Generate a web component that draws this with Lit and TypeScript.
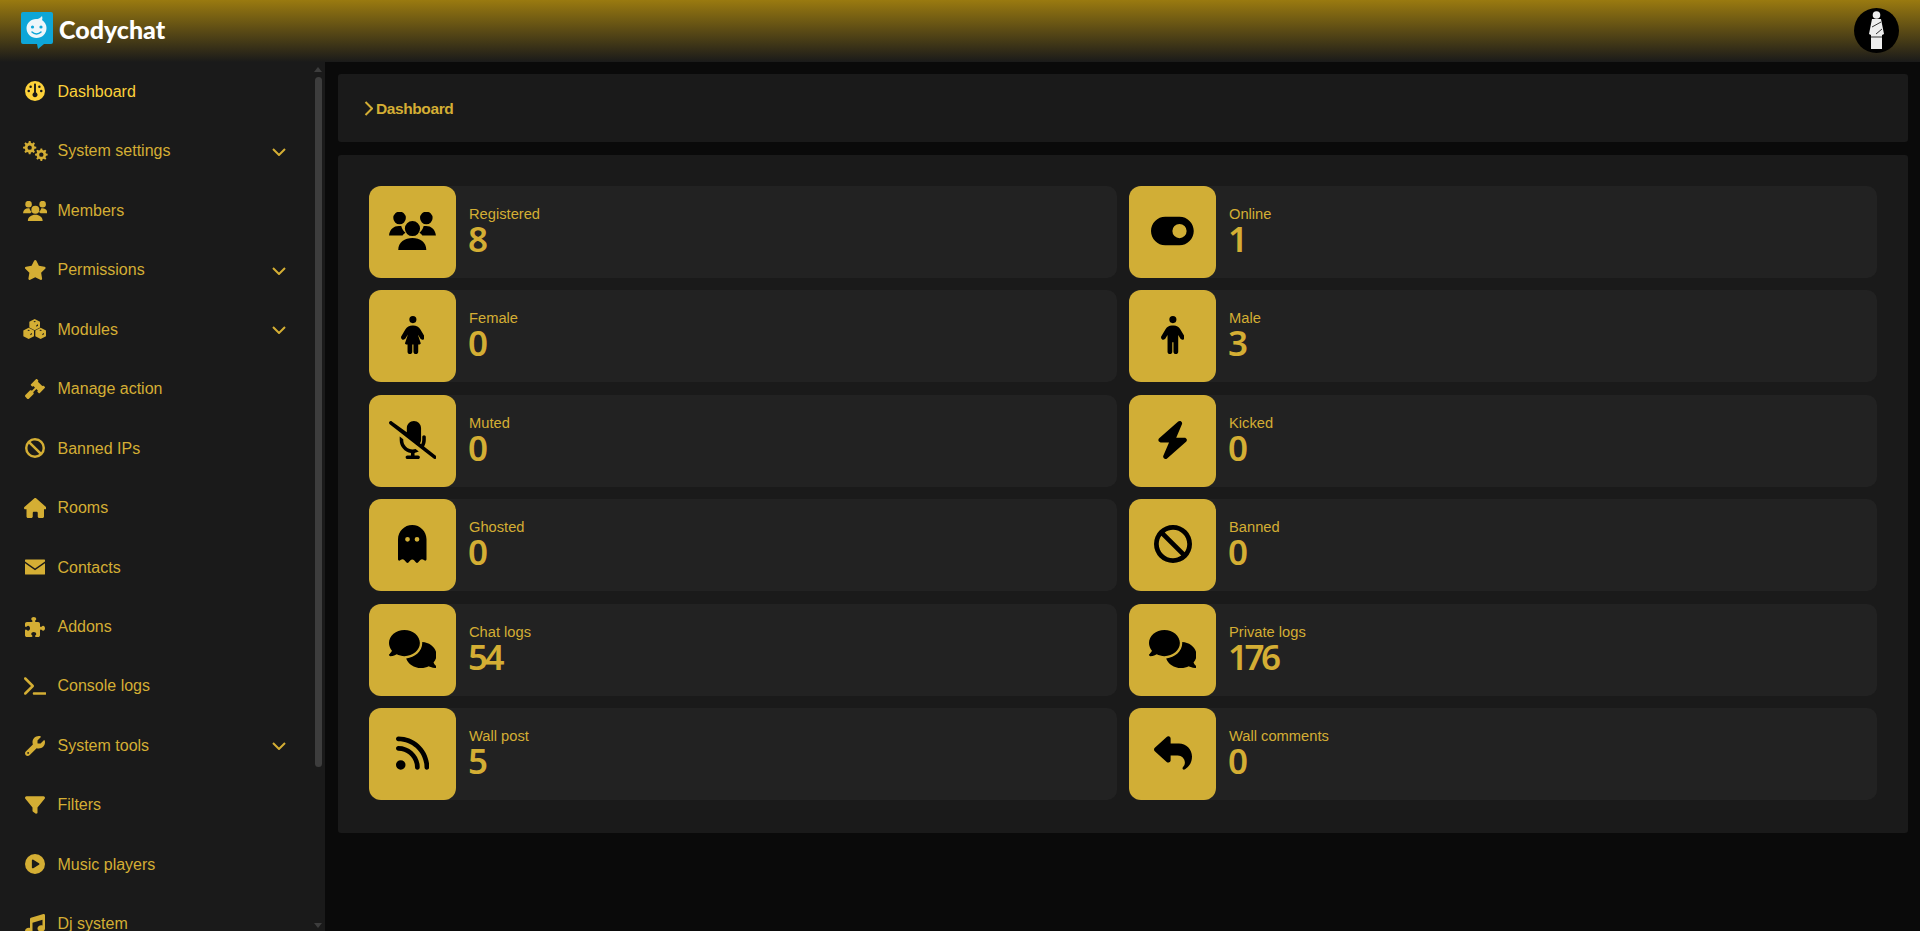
import { LitElement, html, css } from "lit";
import { customElement } from "lit/decorators.js";

type Icon = { w: number; h: number; d: string; eo?: boolean };

const c = (x: number, y: number, r: number) =>
  `M${x - r} ${y}a${r} ${r} 0 1 0 ${2 * r} 0a${r} ${r} 0 1 0 ${-2 * r} 0z`;

const gear = (cx: number, cy: number, R: number, r: number, hole: number, n = 8) => {
  const pts: string[] = [];
  for (let i = 0; i < n; i++) {
    const a = (i * 2 * Math.PI) / n;
    const s = Math.PI / n;
    const p = (rad: number, t: number) =>
      `${(cx + rad * Math.cos(t)).toFixed(2)} ${(cy + rad * Math.sin(t)).toFixed(2)}`;
    pts.push(p(r, a - s * 0.62), p(R, a - s * 0.34), p(R, a + s * 0.34), p(r, a + s * 0.62));
  }
  return `M${pts.join("L")}z${c(cx, cy, hole)}`;
};

const cube = (x: number, y: number) =>
  `M${x} ${y - 17}L${x + 16} ${y - 8.500}V${y + 8.500}L${x} ${y + 17}L${x - 16} ${y + 8.500}V${y - 8.500}z` +
  `M${x - 4} ${y - 9}L${x} ${y - 11}L${x + 4} ${y - 9}L${x} ${y - 7}z` +
  `M${x + 5} ${y + 2}L${x + 10} ${y - 1}V${y + 3}L${x + 5} ${y + 6}z`;

const I: Record<string, Icon> = {
  gauge: { w: 512, h: 512, d: "M0 256a256 256 0 1 1 512 0A256 256 0 1 1 0 256zm320 96c0-26.9-16.5-49.9-40-59.3V88c0-13.3-10.7-24-24-24s-24 10.7-24 24V292.7c-23.5 9.5-40 32.5-40 59.3c0 35.3 28.7 64 64 64s64-28.7 64-64zM144 176a32 32 0 1 0 0-64 32 32 0 1 0 0 64zm-16 80a32 32 0 1 0 -64 0 32 32 0 1 0 64 0zm288 32a32 32 0 1 0 0-64 32 32 0 1 0 0 64zM400 144a32 32 0 1 0 -64 0 32 32 0 1 0 64 0z" },
  gears: { w: 75, h: 60, eo: true, d: gear(20, 20, 20, 15, 6.5) + gear(55, 41, 19, 14.5, 6.5) },
  users: { w: 142, h: 115, d: c(32, 18, 19) + c(113, 18, 19) + c(71, 50, 23) + "M28 115C28 92 48 79 71 79C94 79 113 92 113 115z" + "M0 71C2 52 14 42 30 42L37 42C40 52 44 58 50 63C46 65 43 68 41 71z" + "M142 71C140 52 128 42 112 42L105 42C102 52 98 58 92 63C96 65 99 68 101 71z" },
  star: { w: 576, h: 512, d: "M316.9 18C311.6 7 300.4 0 288.1 0s-23.4 7-28.8 18L195 150.3 51.4 171.5c-12 1.8-22 10.2-25.7 21.7s-.7 24.2 7.9 32.7L137.8 329 113.2 474.7c-2 12 3 24.2 12.9 31.3s23 8 33.8 2.3l128.3-68.5 128.3 68.5c10.8 5.7 23.9 4.9 33.8-2.3s14.9-19.3 12.9-31.3L438.5 329 542.7 225.9c8.6-8.5 11.7-21.2 7.9-32.7s-13.7-19.9-25.7-21.7L381.2 150.3 316.9 18z" },
  cubes: { w: 70, h: 60, eo: true, d: cube(35, 17) + cube(17, 43) + cube(53, 43) },
  gavel: { w: 512, h: 512, d: "M504.971 199.362l-22.627-22.627c-9.373-9.373-24.569-9.373-33.941 0l-5.657 5.657L329.608 69.255l5.657-5.657c9.373-9.373 9.373-24.569 0-33.941L312.638 7.029c-9.373-9.373-24.569-9.373-33.941 0L154.246 131.48c-9.373 9.373-9.373 24.569 0 33.941l22.627 22.627c9.373 9.373 24.569 9.373 33.941 0l5.657-5.657 39.598 39.598-81.04 81.04-5.657-5.657c-12.497-12.497-32.758-12.497-45.255 0L9.373 412.118c-12.497 12.497-12.497 32.758 0 45.255l45.255 45.255c12.497 12.497 32.758 12.497 45.255 0l114.745-114.745c12.497-12.497 12.497-32.758 0-45.255l-5.657-5.657 81.04-81.04 39.598 39.598-5.657 5.657c-9.373 9.373-9.373 24.569 0 33.941l22.627 22.627c9.373 9.373 24.569 9.373 33.941 0l124.451-124.451c9.372-9.372 9.372-24.568 0-33.941z" },
  ban: { w: 512, h: 512, d: "M367.2 412.5L99.5 144.8C77.1 176.1 64 214.5 64 256c0 106 86 192 192 192c41.5 0 79.9-13.1 111.2-35.5zm45.3-45.3C434.9 335.9 448 297.5 448 256c0-106-86-192-192-192c-41.5 0-79.9 13.1-111.2 35.5L412.5 367.2zM0 256a256 256 0 1 1 512 0A256 256 0 1 1 0 256z" },
  house: { w: 576, h: 512, d: "M575.8 255.5c0 18-15 32.1-32 32.1h-32l.7 160.2c0 2.7-.2 5.4-.5 8.1V472c0 22.1-17.9 40-40 40H456c-1.1 0-2.2 0-3.3-.1c-1.4 .1-2.8 .1-4.2 .1H416 392c-22.1 0-40-17.9-40-40V448 384c0-17.7-14.3-32-32-32H256c-17.7 0-32 14.3-32 32v64 24c0 22.1-17.9 40-40 40H160 128.1c-1.5 0-3-.1-4.5-.2c-1.2 .1-2.4 .2-3.6 .2H104c-22.1 0-40-17.9-40-40V360c0-.9 0-1.9 .1-2.8V287.6H32c-18 0-32-14-32-32.1c0-9 3-17 10-24L266.4 8c7-7 15-8 22-8s15 2 21 7L564.8 231.5c8 7 12 15 11 24z" },
  envelope: { w: 512, h: 512, d: "M16 64H496a16 16 0 0 1 16 16V118L256 292L0 118V80a16 16 0 0 1 16-16zM0 162L256 336L512 162V432a16 16 0 0 1-16 16H16a16 16 0 0 1-16-16z" },
  puzzle: { w: 512, h: 512, d: "M192 104.8c0-9.2-5.8-17.3-13.2-22.8C167.2 73.3 160 61.3 160 48c0-26.5 28.7-48 64-48s64 21.5 64 48c0 13.3-7.2 25.3-18.8 34c-7.4 5.5-13.2 13.6-13.2 22.8c0 12.8 10.4 23.2 23.2 23.2H336c26.5 0 48 21.5 48 48v56.8c0 12.8 10.4 23.2 23.2 23.2c9.2 0 17.3-5.8 22.8-13.2c8.7-11.6 20.7-18.8 34-18.8c26.5 0 48 28.7 48 64s-21.5 64-48 64c-13.3 0-25.3-7.2-34-18.8c-5.5-7.4-13.6-13.2-22.8-13.2c-12.8 0-23.2 10.4-23.2 23.2V464c0 26.5-21.5 48-48 48H279.2c-12.8 0-23.2-10.4-23.2-23.2c0-9.2 5.8-17.3 13.2-22.8c11.6-8.7 18.8-20.7 18.8-34c0-26.5-28.7-48-64-48s-64 21.5-64 48c0 13.3 7.2 25.3 18.8 34c7.4 5.5 13.2 13.6 13.2 22.8c0 12.8-10.4 23.2-23.2 23.2H48c-26.5 0-48-21.5-48-48V343.2C0 330.4 10.4 320 23.2 320c9.2 0 17.3 5.8 22.8 13.2C54.7 344.8 66.7 352 80 352c26.5 0 48-28.7 48-64s-21.5-64-48-64c-13.3 0-25.3 7.2-34 18.8C40.5 250.2 32.4 256 23.2 256C10.4 256 0 245.6 0 232.8V176c0-26.5 21.5-48 48-48H168.8c12.8 0 23.2-10.4 23.2-23.2z" },
  terminal: { w: 576, h: 512, d: "M9.4 86.6C-3.1 74.1-3.1 53.9 9.4 41.4s32.8-12.5 45.3 0l192 192c12.5 12.5 12.5 32.8 0 45.3l-192 192c-12.5 12.5-32.8 12.5-45.3 0s-12.5-32.8 0-45.3L178.7 256 9.4 86.6zM256 416H544c17.7 0 32 14.3 32 32s-14.3 32-32 32H256c-17.7 0-32-14.3-32-32s14.3-32 32-32z" },
  wrench: { w: 512, h: 512, d: "M352 320c88.4 0 160-71.6 160-160c0-15.3-2.2-30.1-6.2-44.2c-3.1-10.8-16.4-13.2-24.3-5.3l-76.8 76.8c-3 3-7.1 4.7-11.3 4.7H336c-8.8 0-16-7.2-16-16V118.6c0-4.2 1.7-8.3 4.7-11.3l76.8-76.8c7.9-7.9 5.4-21.2-5.3-24.3C382.1 2.2 367.3 0 352 0C263.6 0 192 71.6 192 160c0 19.1 3.4 37.5 9.5 54.5L19.9 396.1C7.2 408.8 0 426.1 0 444.1C0 481.6 30.4 512 67.9 512c18 0 35.3-7.2 48-19.9L297.5 310.5c17 6.2 35.4 9.5 54.5 9.5zM80 408a24 24 0 1 1 0 48 24 24 0 1 1 0-48z" },
  filter: { w: 512, h: 512, d: "M3.9 54.9C10.5 40.9 24.5 32 40 32H472c15.5 0 29.5 8.9 36.1 22.9s4.6 30.5-5.2 42.5L320 320.9V448c0 12.1-6.8 23.2-17.7 28.6s-23.8 4.3-33.5-3l-64-48c-8.1-6-12.8-15.5-12.8-25.6V320.9L9 97.3C-.7 85.4-2.8 68.8 3.9 54.9z" },
  play: { w: 512, h: 512, d: "M0 256a256 256 0 1 1 512 0A256 256 0 1 1 0 256zM188.3 147.1c-7.6 4.2-12.3 12.3-12.3 20.9V344c0 8.7 4.7 16.7 12.3 20.9s16.8 4.1 24.3-.5l144-88c7.1-4.4 11.5-12.1 11.5-20.5s-4.4-16.1-11.5-20.5l-144-88c-7.4-4.5-16.7-4.7-24.3-.5z" },
  music: { w: 512, h: 512, d: "M499.1 6.3c8.1 6 12.9 15.6 12.9 25.7v72V368c0 44.2-43 80-96 80s-96-35.8-96-80s43-80 96-80c11.2 0 22 1.6 32 4.6V147L192 223.8V432c0 44.2-43 80-96 80s-96-35.8-96-80s43-80 96-80c11.2 0 22 1.6 32 4.6V200 128c0-14.1 9.3-26.6 22.8-30.7l320-96c9.7-2.9 20.2-1.1 28.3 5z" },
  toggle: { w: 576, h: 512, d: "M192 64C86 64 0 150 0 256S86 448 192 448H384c106 0 192-86 192-192s-86-192-192-192H192zm192 96a96 96 0 1 1 0 192 96 96 0 1 1 0-192z" },
  dress: { w: 320, h: 512, d: "M160 0a48 48 0 1 1 0 96 48 48 0 1 1 0-96zM88 384H70.2c-10.9 0-18.6-10.7-15.2-21.1L93.3 248.1 59.4 304.5c-9.1 15.1-28.8 20-43.9 10.9s-20-28.8-10.9-43.9l53.6-89.2c20.3-33.7 56.7-54.3 96-54.3h11.6c39.3 0 75.7 20.6 96 54.3l53.6 89.2c9.1 15.1 4.2 34.8-10.9 43.9s-34.8 4.2-43.9-10.9l-33.9-56.3L265 362.9c3.5 10.4-4.3 21.1-15.2 21.1H232v96c0 17.7-14.3 32-32 32s-32-14.3-32-32V384H152v96c0 17.7-14.3 32-32 32s-32-14.3-32-32V384z" },
  person: { w: 320, h: 512, d: "M112 48a48 48 0 1 1 96 0 48 48 0 1 1 -96 0zm40 304V480c0 17.7-14.3 32-32 32s-32-14.3-32-32V256.9L59.4 304.5c-9.1 15.1-28.8 20-43.9 10.9s-20-28.8-10.9-43.9l58.3-97c17.4-28.9 48.6-46.6 82.3-46.6h29.7c33.7 0 64.9 17.7 82.3 46.6l58.3 97c9.1 15.1 4.2 34.8-10.9 43.9s-34.8 4.2-43.9-10.9L232 256.9V480c0 17.7-14.3 32-32 32s-32-14.3-32-32V352H152z" },
  mute: { w: 640, h: 512, d: "M38.8 5.1C28.4-3.1 13.3-1.2 5.1 9.2S-1.2 34.7 9.2 42.9l592 464c10.4 8.2 25.5 6.3 33.7-4.1s6.3-25.5-4.1-33.7L472.1 344.7c15.2-26 23.9-56.3 23.9-88.7V216c0-13.3-10.7-24-24-24s-24 10.7-24 24v40c0 21.2-5.1 41.1-14.2 58.7L416 300.8c9.9-14.4 16-32.3 16-52.8V96c0-53-43-96-96-96s-96 43-96 96v54.3L38.8 5.1zM344 430.4c20.4-2.8 39.7-9.1 57.3-18.2l-43.1-33.9C346.1 382 333.3 384 320 384c-70.7 0-128-57.3-128-128v-8.7L144.7 210c-.5 1.9-.7 3.9-.7 6v40c0 89.1 66.2 162.7 152 174.4V464H248c-13.3 0-24 10.7-24 24s10.7 24 24 24h72 72c13.3 0 24-10.7 24-24s-10.7-24-24-24H344V430.4z" },
  bolt: { w: 448, h: 512, d: "M349.4 44.6c5.9-13.7 1.5-29.7-10.6-38.5s-28.6-8-39.9 1.8l-256 224c-10 8.8-13.6 22.9-8.9 35.3S50.7 288 64 288H175.5L98.6 467.4c-5.9 13.7-1.5 29.7 10.6 38.5s28.6 8 39.9-1.8l256-224c10-8.8 13.6-22.9 8.9-35.3s-16.6-20.7-30-20.7H272.5L349.4 44.6z" },
  ghost: { w: 384, h: 512, d: "M40.1 467.1l-11.2 9c-3.2 2.5-7.1 3.9-11.1 3.9C8 480 0 472 0 462.2V192C0 86 86 0 192 0S384 86 384 192V462.2c0 9.8-8 17.8-17.8 17.8c-4 0-7.9-1.4-11.1-3.9l-11.2-9c-13.4-10.7-32.8-9-44.1 3.9L269.3 506c-3.3 3.8-8.2 6-13.3 6s-9.9-2.2-13.3-6l-26.6-30.5c-12.7-14.6-35.4-14.6-48.2 0L141.3 506c-3.3 3.8-8.2 6-13.3 6s-9.9-2.2-13.3-6L84.2 471c-11.3-12.9-30.7-14.6-44.1-3.9zM160 192a32 32 0 1 0 -64 0 32 32 0 1 0 64 0zm96 32a32 32 0 1 0 0-64 32 32 0 1 0 0 64z" },
  comments: { w: 640, h: 512, d: "M208 352c114.9 0 208-78.8 208-176S322.9 0 208 0S0 78.8 0 176c0 38.6 14.7 74.3 39.6 103.4c-3.5 9.4-8.7 17.7-14.2 24.7c-4.8 6.2-9.7 11-13.3 14.3c-1.8 1.6-3.3 2.9-4.3 3.7c-.5 .4-.9 .7-1.1 .8l-.2 .2 0 0 0 0C1 327.2-1.4 334.4 .8 340.9S9.1 352 16 352c21.8 0 43.8-5.6 62.1-12.5c9.2-3.5 17.8-7.4 25.3-11.4C134.1 343.3 169.8 352 208 352zM448 176c0 112.3-99.1 196.9-216.5 207C255.8 457.4 336.4 512 432 512c38.2 0 73.9-8.7 104.7-23.9c7.5 4 16 7.9 25.2 11.4c18.3 6.9 40.3 12.5 62.1 12.5c6.9 0 13.1-4.5 15.2-11.1c2.1-6.6-.2-13.8-5.8-17.9l0 0 0 0-.2-.2c-.2-.2-.6-.4-1.1-.8c-1-.8-2.5-2-4.3-3.7c-3.6-3.3-8.5-8.1-13.3-14.3c-5.5-7-10.7-15.4-14.2-24.7c24.9-29 39.6-64.7 39.6-103.4c0-92.8-84.9-168.9-192.6-175.5c.4 5.1 .6 10.3 .6 15.5z" },
  rss: { w: 448, h: 512, d: "M0 64C0 46.3 14.3 32 32 32c229.8 0 416 186.2 416 416c0 17.7-14.3 32-32 32s-32-14.3-32-32C384 253.6 226.4 96 32 96C14.3 96 0 81.7 0 64zM0 416a64 64 0 1 1 128 0A64 64 0 1 1 0 416zM32 160c159.1 0 288 128.9 288 288c0 17.7-14.3 32-32 32s-32-14.3-32-32c0-123.7-100.3-224-224-224c-17.7 0-32-14.3-32-32s14.3-32 32-32z" },
  reply: { w: 512, h: 512, d: "M205 34.8c11.5 5.1 19 16.6 19 29.2v64H336c97.2 0 176 78.8 176 176c0 113.3-81.5 163.9-100.2 174.1c-2.5 1.4-5.3 1.9-8.1 1.9c-10.9 0-19.7-8.9-19.7-19.7c0-7.5 4.3-14.4 9.8-19.5c9.4-8.8 22.2-26.4 22.2-56.7c0-53-43-96-96-96H224v64c0 12.6-7.4 24.1-19 29.2s-25 3-34.4-5.4l-160-144C3.9 225.7 0 217.1 0 208s3.9-17.7 10.6-23.8l160-144c9.4-8.5 22.8-10.6 34.4-5.4z" },
};

const NAV: { label: string; icon: string; more?: boolean; active?: boolean }[] = [
  { label: "Dashboard", icon: "gauge", active: true },
  { label: "System settings", icon: "gears", more: true },
  { label: "Members", icon: "users" },
  { label: "Permissions", icon: "star", more: true },
  { label: "Modules", icon: "cubes", more: true },
  { label: "Manage action", icon: "gavel" },
  { label: "Banned IPs", icon: "ban" },
  { label: "Rooms", icon: "house" },
  { label: "Contacts", icon: "envelope" },
  { label: "Addons", icon: "puzzle" },
  { label: "Console logs", icon: "terminal" },
  { label: "System tools", icon: "wrench", more: true },
  { label: "Filters", icon: "filter" },
  { label: "Music players", icon: "play" },
  { label: "Dj system", icon: "music" },
];

const STATS: [string, string, string][] = [
  ["Registered", "8", "users"], ["Online", "1", "toggle"],
  ["Female", "0", "dress"], ["Male", "3", "person"],
  ["Muted", "0", "mute"], ["Kicked", "0", "bolt"],
  ["Ghosted", "0", "ghost"], ["Banned", "0", "ban"],
  ["Chat logs", "54", "comments"], ["Private logs", "176", "comments"],
  ["Wall post", "5", "rss"], ["Wall comments", "0", "reply"],
];

const icon = (name: string, h: number) => {
  const i = I[name];
  return html`<svg class="ico ${i.eo ? "eo" : ""}" viewBox="0 0 ${i.w} ${i.h}"
    style="width:${(i.w / i.h) * h}px;height:${h}px"><path d=${i.d}></path></svg>`;
};

@customElement("app-root")
export class AppRoot extends LitElement {
  static styles = css`
    :host {
      display: flex;
      flex-direction: column;
      height: 100vh;
      overflow: hidden;
      background: #0a0a0a;
      font-family: "Liberation Sans", Arial, sans-serif;
      color: #d4ae34;
    }
    .top {
      flex: 0 0 62px;
      display: flex;
      align-items: center;
      justify-content: space-between;
      padding: 0 21px 0 21px;
      box-sizing: border-box;
      background: linear-gradient(to bottom, #9a7a10, #1a1a1a);
    }
    .brand { display: flex; align-items: center; gap: 6px; }
    .logo { width: 32px; height: 37px; margin-top: -1px; display: block; }
    .name {
      font-family: Lato, "Noto Sans", sans-serif;
      font-weight: 900;
      font-size: 25px;
      color: #fff;
      line-height: 30px;
      margin-top: -4px;
    }
    .avatar { width: 45px; height: 45px; display: block; margin-top: -1px; }
    .body { flex: 1; min-height: 0; display: flex; }
    .side {
      flex: 0 0 325px;
      box-sizing: border-box;
      overflow: hidden;
      background: #1a1a1a;
      position: relative;
    }
    .thumb {
      position: absolute;
      left: 315px;
      top: 15px;
      width: 7px;
      height: 690px;
      border-radius: 4px;
      background: #3d3d3d;
    }
    .arrow {
      position: absolute;
      left: 314px;
      width: 0;
      height: 0;
      border-left: 4.5px solid transparent;
      border-right: 4.5px solid transparent;
    }
    .arrow.up { top: 5px; border-bottom: 5px solid #3d3d3d; }
    .arrow.down { bottom: 3px; border-top: 5px solid #3d3d3d; }
    .item {
      height: 59.45px;
      display: flex;
      align-items: center;
      font-size: 16px;
      color: #d4ae34;
    }
    .item.active { color: #fdd23a; }
    .item.active .ib { margin-top: -2px; }
    .ib { flex: 0 0 26px; margin-left: 22px; margin-right: 9.5px; display: flex; justify-content: center; }
    .lab { flex: 1; margin-top: 0.6px; }
    .chev { width: 14px; height: 8px; margin-right: 39px; margin-top: 1px; fill: none; stroke: currentColor; stroke-width: 2; }
    .ico { display: block; fill: currentColor; }
    .ico.eo { fill-rule: evenodd; }
    .main {
      flex: 1;
      min-width: 0;
      padding: 12px 12px 0 13px;
      display: flex;
      flex-direction: column;
      gap: 13px;
    }
    .crumb {
      height: 68px;
      background: #1a1a1a;
      border-radius: 3px;
      display: flex;
      align-items: center;
      padding-left: 26px;
      gap: 3px;
      font-size: 15.5px;
      font-weight: 700;
      letter-spacing: -0.4px;
    }
    .crumb span { margin-top: 1px; }
    .crumb svg { width: 9px; height: 15px; fill: none; stroke: currentColor; stroke-width: 2; }
    .card {
      background: #1a1a1a;
      border-radius: 3px;
      padding: 31px;
      padding-bottom: 33px;
      display: grid;
      grid-template-columns: 1fr 1fr;
      grid-auto-rows: 92px;
      gap: 12.4px 12px;
    }
    .stat {
      background: #222222;
      border-radius: 10px;
      display: flex;
      align-items: center;
    }
    .tile {
      flex: 0 0 87px;
      box-sizing: border-box;
      height: 100%;
      padding-bottom: 2px;
      background: #d1ae36;
      border-radius: 12px;
      color: #000;
      display: flex;
      align-items: center;
      justify-content: center;
    }
    .info { padding-left: 13px; display: flex; flex-direction: column; margin-top: -3px; }
    .k { font-size: 14.7px; line-height: 17px; margin-top: 1px; margin-bottom: -1px; }
    .v {
      font-family: "Noto Sans", sans-serif;
      font-size: 35px;
      line-height: 34px;
      font-weight: 600;
      letter-spacing: -3.5px;
      margin-left: -1px;
    }
  `;

  render() {
    return html`
      <div class="top">
        <div class="brand">
          <svg class="logo" viewBox="0 0 32 37">
            <path fill="#0ea6d8" d="M2 0H30a2 2 0 0 1 2 2V30a2 2 0 0 1-2 2H23L17 37L16 32H2a2 2 0 0 1-2-2V2a2 2 0 0 1 2-2z"></path>
            <path fill="#eef6fa" d="M15 7C17 7 19 6.500 21 4C21.500 6 21.500 7 21 8C24 10 25.500 13 25.500 16C25.500 22 21 26 15.500 26C10 26 5.500 22 5.500 16C5.500 11 10 7 15 7z"></path>
            <circle cx="11.500" cy="15" r="1.600" fill="#0ea6d8"></circle>
            <circle cx="20" cy="15" r="1.600" fill="#0ea6d8"></circle>
            <path d="M11 20C13.500 22.500 17.500 22.500 20 20" fill="none" stroke="#0ea6d8" stroke-width="1.500" stroke-linecap="round"></path>
          </svg>
          <span class="name">Codychat</span>
        </div>
        <svg class="avatar" viewBox="0 0 45 45">
          <circle cx="22.500" cy="22.500" r="22.500" fill="#000"></circle>
          <circle cx="22.500" cy="7" r="3.800" fill="#eee"></circle>
          <path fill="#eee" d="M18 11H27L30 26L28 27V41H17V27L15 26z"></path>
          <path fill="none" stroke="#333" stroke-width="1" d="M18 19L27 14M22 26L28 21M17 29H28"></path>
        </svg>
      </div>
      <div class="body">
        <div class="side">
          ${NAV.map(
            (n) => html`<div class="item ${n.active ? "active" : ""}">
              <span class="ib">${icon(n.icon, 20)}</span>
              <span class="lab">${n.label}</span>
              ${n.more ? html`<svg class="chev" viewBox="0 0 14 8"><path d="M1 1L7 7L13 1"></path></svg>` : ""}
            </div>`
          )}
          <div class="arrow up"></div>
          <div class="thumb"></div>
          <div class="arrow down"></div>
        </div>
        <div class="main">
          <div class="crumb">
            <svg viewBox="0 0 9 15"><path d="M1.500 1L8 7.500L1.500 14"></path></svg>
            <span>Dashboard</span>
          </div>
          <div class="card">
            ${STATS.map(
              ([k, v, ic]) => html`<div class="stat">
                <div class="tile">${icon(ic, 38)}</div>
                <div class="info">
                  <div class="k">${k}</div>
                  <div class="v">${v}</div>
                </div>
              </div>`
            )}
          </div>
        </div>
      </div>
    `;
  }
}
